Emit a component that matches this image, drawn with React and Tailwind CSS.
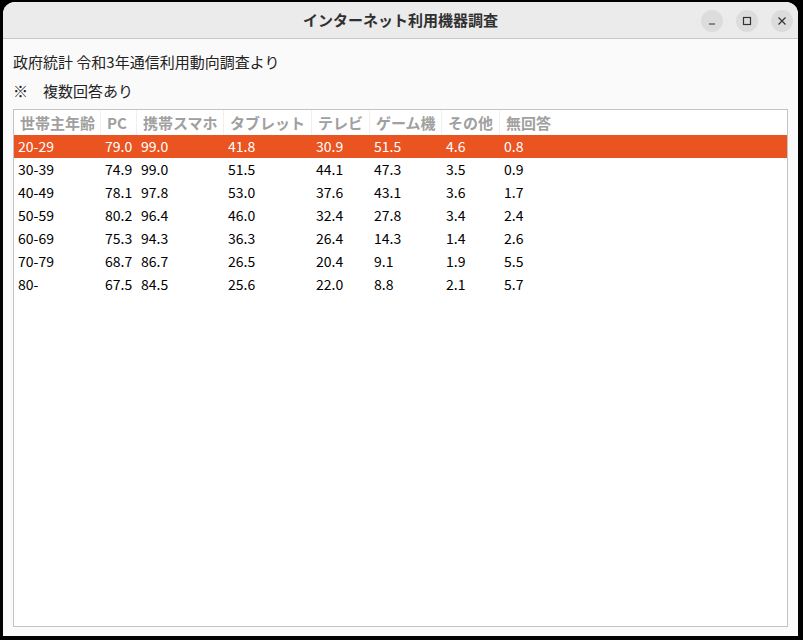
const columns = [
    { label: '世帯主年齢', w: 'w-[87px]' },
    { label: 'PC', w: 'w-[36px]' },
    { label: '携帯スマホ', w: 'w-[87px]' },
    { label: 'タブレット', w: 'w-[88px]' },
    { label: 'テレビ', w: 'w-[58px]' },
    { label: 'ゲーム機', w: 'w-[72px]' },
    { label: 'その他', w: 'w-[58px]' },
    { label: '無回答', w: 'w-[58px]' },
];

const rows = [
    ['20-29', '79.0', '99.0', '41.8', '30.9', '51.5', '4.6', '0.8'],
    ['30-39', '74.9', '99.0', '51.5', '44.1', '47.3', '3.5', '0.9'],
    ['40-49', '78.1', '97.8', '53.0', '37.6', '43.1', '3.6', '1.7'],
    ['50-59', '80.2', '96.4', '46.0', '32.4', '27.8', '3.4', '2.4'],
    ['60-69', '75.3', '94.3', '36.3', '26.4', '14.3', '1.4', '2.6'],
    ['70-79', '68.7', '86.7', '26.5', '20.4', '9.1', '1.9', '5.5'],
    ['80-', '67.5', '84.5', '25.6', '22.0', '8.8', '2.1', '5.7'],
];

function WinButton({ children }) {
    return (
        <div className="flex h-[22px] w-[22px] items-center justify-center rounded-full bg-[#dcdcdc] text-[#333]">
            {children}
        </div>
    );
}

export default function App() {
    return (
        <div
            className="h-[640px] w-[803px] bg-black pl-[3px] pt-[2px]"
            style={{ fontFamily: '"Noto Sans CJK JP", "Noto Sans", sans-serif' }}
        >
            <div className="flex h-[634px] w-[795px] flex-col overflow-hidden rounded-t-[12px] bg-[#fafafa]">
                <div className="relative flex h-[37px] shrink-0 items-center justify-center border-b border-[#c8c8c8] bg-[#ebebeb]">
                    <span className="text-[15px] font-bold text-[#303030]">インターネット利用機器調査</span>
                    <div className="absolute right-[5px] top-[8px] flex gap-[13px]">
                        <WinButton>
                            <svg width="10" height="10" viewBox="0 0 10 10">
                                <path d="M2 8h6" stroke="currentColor" strokeWidth="1.2" />
                            </svg>
                        </WinButton>
                        <WinButton>
                            <svg width="10" height="10" viewBox="0 0 10 10">
                                <rect x="1.5" y="1.5" width="7" height="7" fill="none" stroke="currentColor" strokeWidth="1.2" />
                            </svg>
                        </WinButton>
                        <WinButton>
                            <svg width="10" height="10" viewBox="0 0 10 10">
                                <path d="M1.5 1.5l7 7M8.5 1.5l-7 7" stroke="currentColor" strokeWidth="1.2" />
                            </svg>
                        </WinButton>
                    </div>
                </div>

                <div className="flex flex-1 flex-col px-[10px] pb-[9px] text-[14px] text-[#222]">
                    <p className="mt-[13px] h-[20px] text-[15px] leading-[20px]">政府統計 令和3年通信利用動向調査より</p>
                    <p className="mt-[9px] h-[20px] text-[15px] leading-[20px]">※　複数回答あり</p>
                    <div className="mt-[8px] flex-1 border border-[#c4c4c4] bg-white">
                        <div className="flex h-[25px] items-center">
                            {columns.map((c, i) => (
                                <div
                                    key={c.label}
                                    className={`${c.w} h-full truncate ${i < columns.length - 1 ? 'border-r border-[#f0f0f0]' : ''} pl-[6px] text-[15px] font-bold leading-[25px] text-[#a0a0a0]`}
                                >
                                    {c.label}
                                </div>
                            ))}
                        </div>
                        {rows.map((r, ri) => (
                            <div
                                key={r[0]}
                                className={`flex h-[23px] items-center ${ri === 0 ? 'bg-[#e95420] text-white' : 'text-black'}`}
                            >
                                {r.map((v, ci) => (
                                    <div key={ci} className={`${columns[ci].w} pl-[4px] leading-[23px]`}>
                                        {v}
                                    </div>
                                ))}
                            </div>
                        ))}
                    </div>
                </div>
            </div>
        </div>
    );
}
